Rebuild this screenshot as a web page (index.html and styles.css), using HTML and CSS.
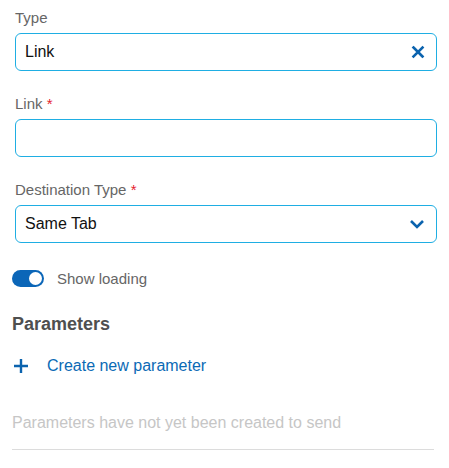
FILE: index.html
```html
<!DOCTYPE html>
<html>
<head>
<meta charset="utf-8">
<link rel="stylesheet" href="styles.css">
</head>
<body>
<div class="page">
  <div class="fields">
    <div class="field">
      <div class="label">Type</div>
      <div class="input">
        <span class="value">Link</span>
        <svg class="icon" width="14" height="14" viewBox="0 0 14 14"><path d="M2.5 2.5 L11.5 11.5 M11.5 2.5 L2.5 11.5" stroke="#0b63ae" stroke-width="2.6" stroke-linecap="square" fill="none"/></svg>
      </div>
    </div>
    <div class="field">
      <div class="label">Link <span class="req">*</span></div>
      <div class="input"></div>
    </div>
    <div class="field">
      <div class="label">Destination Type <span class="req">*</span></div>
      <div class="input">
        <span class="value">Same Tab</span>
        <svg class="icon" width="16" height="14" viewBox="0 0 16 14"><path d="M2 4 L8 10 L14 4" stroke="#0b63ae" stroke-width="2.6" fill="none"/></svg>
      </div>
    </div>
  </div>
  <div class="toggle-row">
    <span class="toggle"><span class="knob"></span></span>
    <span class="toggle-label">Show loading</span>
  </div>
  <h2 class="title">Parameters</h2>
  <div class="create">
    <svg width="16" height="16" viewBox="0 0 16 16"><path d="M8 1 V15 M1 8 H15" stroke="#0b63ae" stroke-width="2.4" fill="none"/></svg>
    <span class="create-text">Create new parameter</span>
  </div>
  <div class="empty">Parameters have not yet been created to send</div>
  <div class="rule"></div>
</div>
</body>
</html>
```
FILE: styles.css
```css
html, body { margin: 0; padding: 0; background: #fff; }
body { font-family: "Liberation Sans", Arial, sans-serif; }
.page { padding: 8px 12px 0 12px; display: flex; flex-direction: column; }
.fields { display: flex; flex-direction: column; gap: 23px; padding-left: 3px; }
.field { display: flex; flex-direction: column; }
.label { font-size: 15px; line-height: 20px; color: #666; margin-bottom: 5px; }
.req { color: #e5212f; }
.input {
  height: 38px; box-sizing: border-box; border: 1px solid #1faee3; border-radius: 6px;
  display: flex; align-items: center; justify-content: space-between; padding: 0 11px 0 9px;
}
.value { font-size: 16px; color: #111; }
.icon { display: block; }
.toggle-row { display: flex; align-items: center; margin-top: 27px; height: 17px; gap: 13px; }
.toggle { width: 32px; height: 17px; border-radius: 9px; background: #0b66b8; position: relative; display: block; }
.knob { position: absolute; right: 2px; top: 2px; width: 13px; height: 13px; border-radius: 50%; background: #fff; }
.toggle-label { font-size: 15px; color: #666; }
.title { margin: 26px 0 0; font-size: 18px; line-height: 22px; font-weight: bold; color: #4f4f4f; }
.create { display: flex; align-items: center; gap: 18px; margin-top: 21px; padding-left: 1px; height: 20px; }
.create svg { display: block; }
.create-text { font-size: 16px; color: #0b6ab5; }
.empty { margin-top: 37px; font-size: 16px; line-height: 20px; color: #c6c6c6; }
.rule { margin-top: 16px; height: 1px; background: #dcdcdc; width: 422px; }
```
